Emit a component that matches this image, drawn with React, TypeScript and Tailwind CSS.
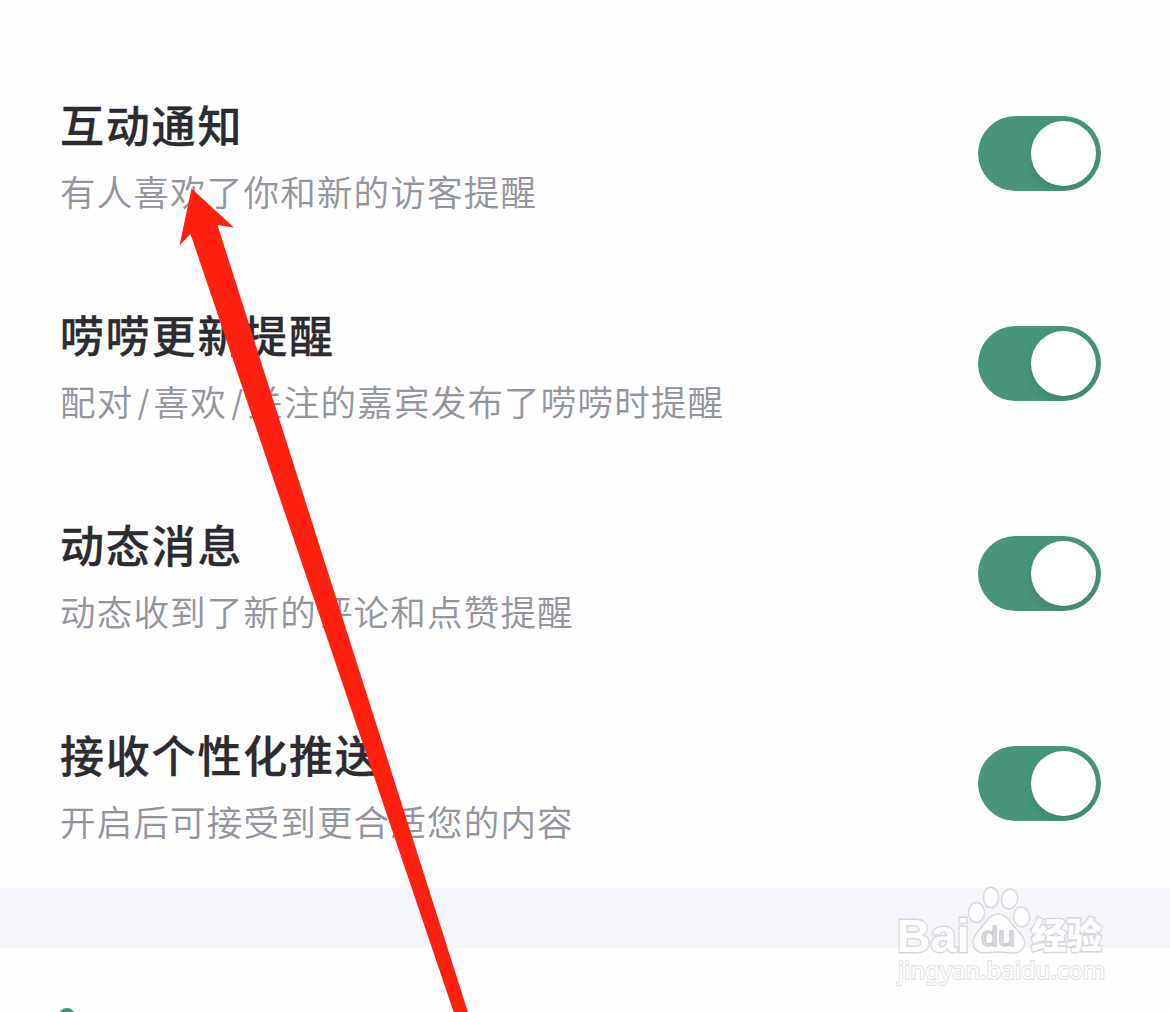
import { Fragment } from 'react';

const items = [
  { title: '互动通知', desc: '有人喜欢了你和新的访客提醒' },
  { title: '唠唠更新提醒', desc: '配对/喜欢/关注的嘉宾发布了唠唠时提醒' },
  { title: '动态消息', desc: '动态收到了新的评论和点赞提醒' },
  { title: '接收个性化推送', desc: '开启后可接受到更合适您的内容' },
];

function Toggle() {
  return (
    <button
      role="switch"
      aria-checked="true"
      className="flex h-[75px] w-[123px] items-center justify-end overflow-hidden rounded-full bg-[#48957b] pr-[5px]"
    >
      <span className="size-[65px] rounded-full bg-white shadow-[0_4px_10px_rgba(0,0,0,0.12)]" />
    </button>
  );
}

function SettingRow({ title, desc }: { title: string; desc: string }) {
  return (
    <li className="flex h-[210px] shrink-0 items-start justify-between pr-[69px] pl-[60px]">
      <div className="-mt-[3px] whitespace-nowrap">
        <h2 className="text-[44px] leading-[66px] font-medium tracking-[1.8px] text-[#2b2b30] [-webkit-text-stroke:0.3px_#2b2b30]">
          {title}
        </h2>
        <p className="pt-px text-[35.5px] leading-[66px] font-[350] tracking-[1.2px] text-[#94949d] [-webkit-text-stroke:0.1px_#94949d]">
          {desc.split('/').map((part, i) => (
            <Fragment key={part}>
              {i > 0 && (
                <span className="inline-block w-[20.2px] text-center font-['Inter',sans-serif] leading-none font-light tracking-normal">
                  /
                </span>
              )}
              {part}
            </Fragment>
          ))}
        </p>
      </div>
      <div className="mt-[22px]">
        <Toggle />
      </div>
    </li>
  );
}

function Arrow() {
  return (
    <svg className="pointer-events-none absolute inset-0" width="1170" height="1012" viewBox="0 0 1170 1012">
      <path d="M191.5 188.5 L234 227.5 L217.5 225 L467.9 1012 L453.6 1012 L190.5 234 L179.5 245.5 Z" fill="#ff2010" />
    </svg>
  );
}

function Watermark() {
  return (
    <svg
      className="pointer-events-none absolute top-[880px] left-[890px]"
      width="224"
      height="112"
      viewBox="890 880 224 112"
      fill="#fdfdfe"
      stroke="#d9d9dc"
      strokeWidth="1.5"
      fontFamily='"Liberation Sans", "Noto Sans CJK SC", sans-serif'
    >
      <g strokeWidth="2.8" paintOrder="stroke">
        <text x="896.5" y="951.5" fontSize="47" fontWeight="700" textLength="73" lengthAdjust="spacingAndGlyphs">
          Bai
        </text>
        <text
          x="1031"
          y="948.5"
          fontSize="36"
          fontWeight="900"
          textLength="71"
          lengthAdjust="spacingAndGlyphs"
          fontFamily='"Noto Sans CJK SC", sans-serif'
        >
          经验
        </text>
        <text
          x="898"
          y="979"
          fontSize="24"
          textLength="207"
          lengthAdjust="spacingAndGlyphs"
          fontFamily='"Noto Sans", sans-serif'
          strokeWidth="2"
          stroke="#e1e1e3"
        >
          jingyan.baidu.com
        </text>
      </g>
      <ellipse cx="976.5" cy="912.5" rx="8" ry="10" />
      <ellipse cx="991" cy="897.5" rx="7.5" ry="10.2" />
      <ellipse cx="1009.5" cy="899" rx="8" ry="10" transform="rotate(12 1009.5 899)" />
      <ellipse cx="1021.5" cy="917" rx="8" ry="10" transform="rotate(-8 1021.5 917)" />
      <path d="M998 914 C1004 914 1008 918 1012 924 C1016 930 1024 934 1024.5 942 C1025 949 1020 953 1013 953 C1007 953 1004 952 998 952 C992 952 989 953 984 953 C977 953 973 948 973 942 C973 934 980 930 984 924 C988 918 992 914 998 914 Z" />
      <text
        x="981"
        y="946"
        fontSize="28"
        textLength="34"
        lengthAdjust="spacingAndGlyphs"
        fill="#e9e9ec"
        stroke="#cfcfd4"
        strokeWidth="1.6"
      >
        du
      </text>
    </svg>
  );
}

export default function App() {
  return (
    <div className="relative h-[1012px] w-[1170px] overflow-hidden bg-[#fefefe] font-['Noto_Sans_CJK_SC',sans-serif]">
      <ul className="flex h-[888px] flex-col overflow-hidden pt-[94px]">
        {items.map((item) => (
          <SettingRow key={item.title} {...item} />
        ))}
      </ul>
      <div className="h-[60px] bg-[#f5f6fb]" />
      <div className="h-[64px] overflow-hidden pt-[60px] pl-[59px]">
        <div className="size-4 rounded-full bg-[#48957b]" />
      </div>
      <Arrow />
      <Watermark />
    </div>
  );
}
